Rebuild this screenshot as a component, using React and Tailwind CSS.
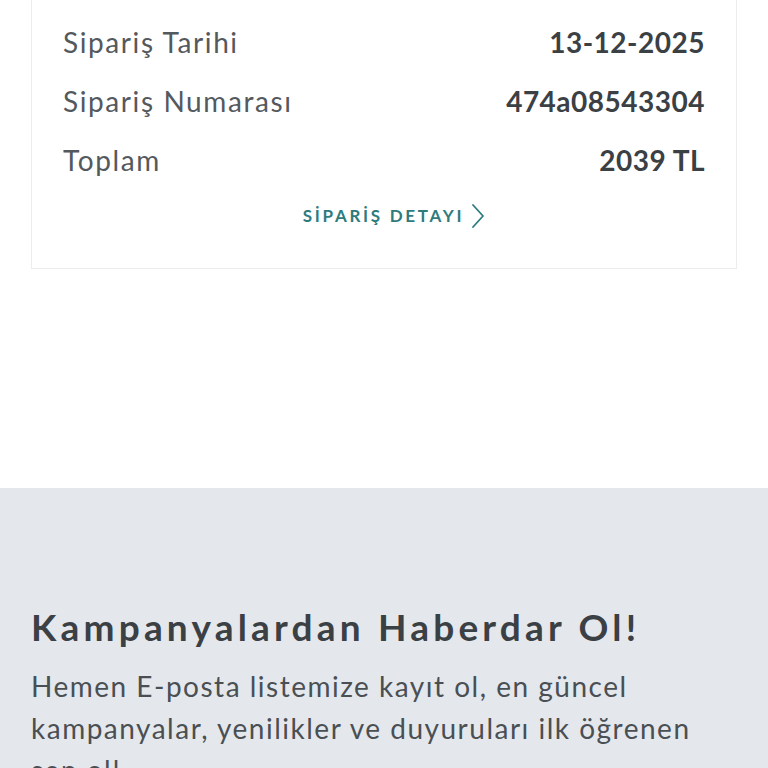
const rows = [
  { label: 'Sipariş Tarihi', value: '13-12-2025' },
  { label: 'Sipariş Numarası', value: '474a08543304' },
  { label: 'Toplam', value: '2039 TL' },
];

const App = () => {
  return (
    <div className="min-h-[768px] bg-white font-['Lato',sans-serif]">
      <div className="px-[31px]">
        <div className="border-x border-b border-[#ececec] px-[31px] pt-[12px] pb-[39px]">
          {rows.map((row) => (
            <div key={row.label} className="flex h-[59px] items-center justify-between">
              <span className="text-[28px] tracking-[1.6px] text-[#54595e]">{row.label}</span>
              <span className="text-[28px] font-bold tracking-[0.5px] text-[#3b4045]">{row.value}</span>
            </div>
          ))}
          <div className="mt-[14px] flex h-[26px] items-center justify-center gap-[7px] pl-[20px]">
            <span className="text-[17px] font-bold tracking-[2.7px] text-[#2e7b7e]">SİPARİŞ DETAYI</span>
            <svg width="14" height="26" viewBox="0 0 14 26" fill="none" className="text-[#2e7b7e]">
              <path d="M2 2 L12 13 L2 24" stroke="currentColor" strokeWidth="1.8" strokeLinecap="round" strokeLinejoin="round" />
            </svg>
          </div>
        </div>
      </div>

      <div className="mt-[219px] bg-[#e4e8ec] px-[31px] pt-[115px] pb-10">
        <h2 className="text-[37px] font-bold leading-[48px] tracking-[4.2px] text-[#3b4045]">
          Kampanyalardan Haberdar Ol!
        </h2>
        <p className="mt-[14px] text-[28px] leading-[42px] tracking-[1.5px] text-[#4a4f54]">
          Hemen E-posta listemize kayıt ol, en güncel kampanyalar, yenilikler ve duyuruları ilk öğrenen sen ol!
        </p>
      </div>
    </div>
  );
};

export default App;
